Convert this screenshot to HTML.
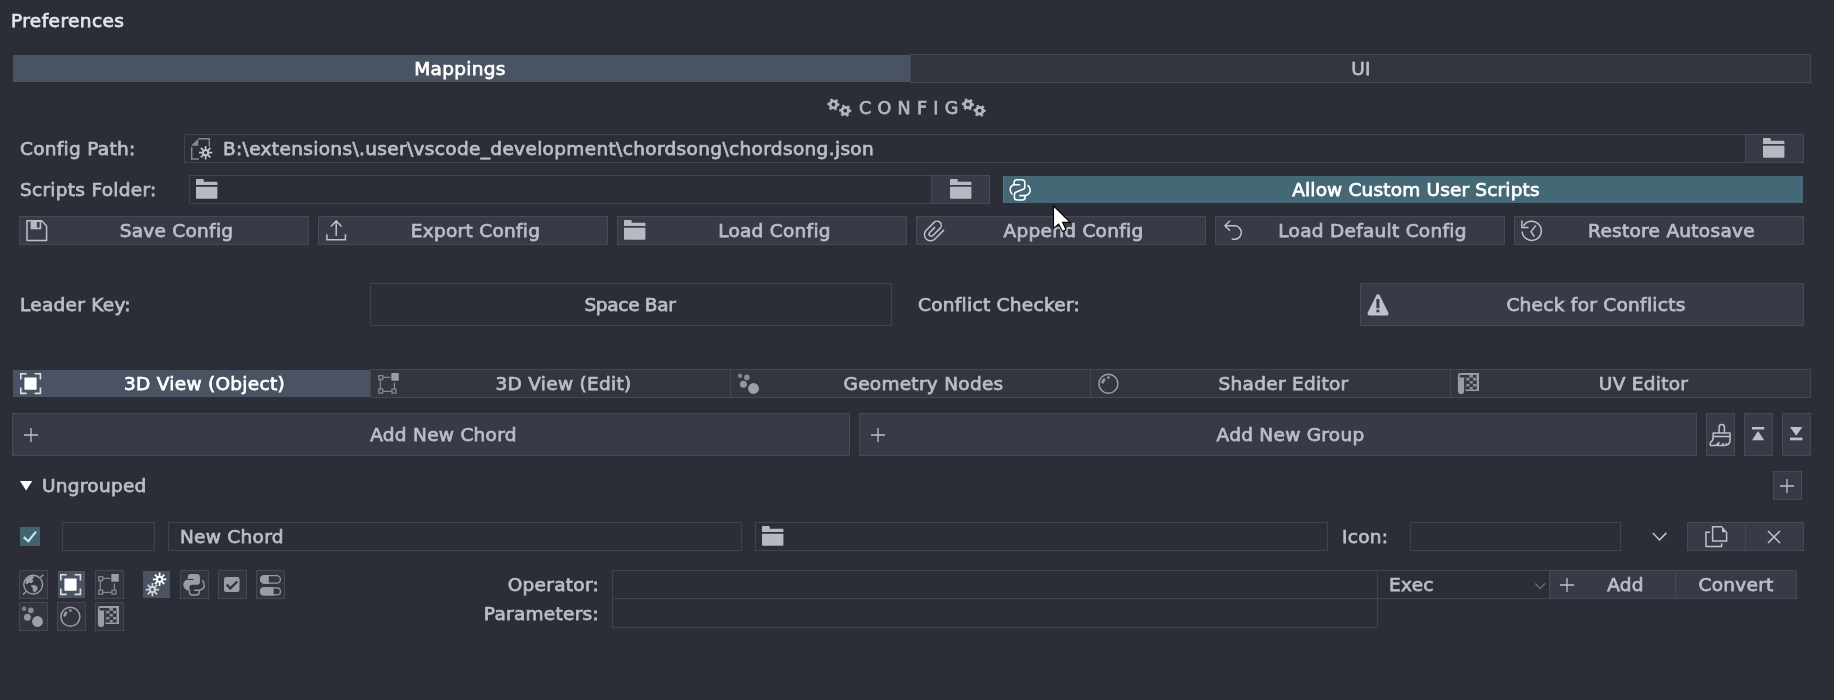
<!DOCTYPE html>
<html lang="en">
<head>
<meta charset="utf-8">
<title>Preferences</title>
<style>
html,body{margin:0;padding:0;}
body{width:1834px;height:700px;overflow:hidden;background:#2b2d37;position:relative;
 font-family:"DejaVu Sans","Liberation Sans",sans-serif;font-size:18.5px;letter-spacing:0.28px;color:#bbbdc8;}
.a{position:absolute;box-sizing:border-box;white-space:pre;}
.t{position:absolute;white-space:pre;line-height:22px;height:22px;-webkit-text-stroke:0.75px currentColor;will-change:transform;transform:translateY(0.4px);}
.btn{background:#383b47;border:1px solid #464a56;}
.fld{background:#2b2d37;border:1px solid #40434e;}
.tab{background:#33353f;border:1px solid #454853;}
.ib{background:#32343e;border:1px solid #454853;}
.ia{background:#4a5361;}
.act{background:#4a5361;border-color:#4a5361;color:#fff;}
.teal{background:#456876;border-color:#456876;color:#fff;}
.c{text-align:center;}
.r{text-align:right;}
svg{position:absolute;overflow:visible;}
</style>
</head>
<body>
<!-- title -->
<div class="t" style="left:11.4px;top:10px;color:#e4e5e9;letter-spacing:0.42px;">Preferences</div>

<!-- top tabs -->
<div class="a tab act" style="left:13px;top:55px;width:897px;height:27px;"></div>
<div class="a tab" style="left:910px;top:54px;width:901px;height:29px;"></div>
<div class="t c" style="left:11px;top:58px;width:898px;color:#fff;">Mappings</div>
<div class="t c" style="left:911px;top:58px;width:900px;">UI</div>

<!-- config header -->
<div class="t" style="left:858.5px;top:96.6px;font-size:17.5px;letter-spacing:6.3px;color:#b4b6bf;">CONFIG</div>

<!-- config path row -->
<div class="t" style="left:20px;top:138px;">Config Path:</div>
<div class="a fld" style="left:184px;top:134px;width:1562px;height:29px;"></div>
<div class="a btn" style="left:1745px;top:134px;width:59px;height:29px;"></div>
<div class="t" style="left:223px;top:138px;letter-spacing:0.34px;">B:\extensions\.user\vscode_development\chordsong\chordsong.json</div>

<!-- scripts folder row -->
<div class="t" style="left:20px;top:179px;">Scripts Folder:</div>
<div class="a fld" style="left:189px;top:175px;width:743px;height:29px;"></div>
<div class="a btn" style="left:931px;top:175px;width:59px;height:29px;"></div>
<div class="a teal" style="left:1003px;top:176px;width:800px;height:27px;border:0;border-left:1px solid #5b7582"></div>
<div class="t c" style="left:1028px;top:179px;width:776px;color:#fff;letter-spacing:0.17px;">Allow Custom User Scripts</div>

<!-- config buttons -->
<div class="a btn" style="left:19px;top:216px;width:290px;height:29px;"></div>
<div class="a btn" style="left:318px;top:216px;width:290px;height:29px;"></div>
<div class="a btn" style="left:617px;top:216px;width:290px;height:29px;"></div>
<div class="a btn" style="left:916px;top:216px;width:290px;height:29px;"></div>
<div class="a btn" style="left:1215px;top:216px;width:290px;height:29px;"></div>
<div class="a btn" style="left:1514px;top:216px;width:290px;height:29px;"></div>
<div class="t c" style="left:44px;top:220px;width:265px;">Save Config</div>
<div class="t c" style="left:343px;top:220px;width:265px;">Export Config</div>
<div class="t c" style="left:642px;top:220px;width:265px;">Load Config</div>
<div class="t c" style="left:941px;top:220px;width:265px;">Append Config</div>
<div class="t c" style="left:1240px;top:220px;width:265px;">Load Default Config</div>
<div class="t c" style="left:1539px;top:220px;width:265px;">Restore Autosave</div>

<!-- leader key row -->
<div class="t" style="left:20px;top:294px;">Leader Key:</div>
<div class="a fld" style="left:370px;top:283px;width:522px;height:43px;"></div>
<div class="t c" style="left:370px;top:294px;width:520px;letter-spacing:-0.3px;">Space Bar</div>
<div class="t" style="left:918px;top:294px;">Conflict Checker:</div>
<div class="a btn" style="left:1360px;top:283px;width:444px;height:43px;"></div>
<div class="t c" style="left:1388px;top:294px;width:416px;">Check for Conflicts</div>

<!-- editor tabs -->
<div class="a tab act" style="left:13px;top:370px;width:357px;height:27px;"></div>
<div class="a tab" style="left:370px;top:369px;width:361px;height:29px;"></div>
<div class="a tab" style="left:730px;top:369px;width:361px;height:29px;"></div>
<div class="a tab" style="left:1090px;top:369px;width:361px;height:29px;"></div>
<div class="a tab" style="left:1450px;top:369px;width:361px;height:29px;"></div>
<div class="t c" style="left:38px;top:373px;width:333px;color:#fff;">3D View (Object)</div>
<div class="t c" style="left:396px;top:373px;width:335px;">3D View (Edit)</div>
<div class="t c" style="left:756px;top:373px;width:335px;">Geometry Nodes</div>
<div class="t c" style="left:1116px;top:373px;width:335px;">Shader Editor</div>
<div class="t c" style="left:1476px;top:373px;width:335px;">UV Editor</div>

<!-- add buttons -->
<div class="a btn" style="left:12px;top:413px;width:838px;height:43px;"></div>
<div class="t c" style="left:37px;top:424px;width:813px;">Add New Chord</div>
<div class="a btn" style="left:859px;top:413px;width:838px;height:43px;"></div>
<div class="t c" style="left:884px;top:424px;width:813px;">Add New Group</div>
<div class="a btn" style="left:1706px;top:413px;width:29px;height:43px;"></div>
<div class="a btn" style="left:1744px;top:413px;width:29px;height:43px;"></div>
<div class="a btn" style="left:1782px;top:413px;width:29px;height:43px;"></div>

<!-- group header -->
<div class="t" style="left:42px;top:475px;">Ungrouped</div>
<div class="a btn" style="left:1773px;top:471px;width:29px;height:29px;"></div>

<!-- chord row -->
<div class="a" style="left:19.5px;top:526.5px;width:20px;height:19.5px;background:#45636f;"></div>
<div class="a fld" style="left:62px;top:522px;width:93px;height:29px;"></div>
<div class="a fld" style="left:168px;top:522px;width:574px;height:29px;"></div>
<div class="t" style="left:180px;top:526px;">New Chord</div>
<div class="a fld" style="left:755px;top:522px;width:573px;height:29px;"></div>
<div class="t" style="left:1342px;top:526px;">Icon:</div>
<div class="a fld" style="left:1410px;top:522px;width:211px;height:29px;"></div>
<div class="a btn" style="left:1687px;top:522px;width:59px;height:29px;"></div>
<div class="a btn" style="left:1745px;top:522px;width:59px;height:29px;"></div>

<!-- icon buttons -->
<div class="a ib" style="left:19px;top:570px;width:29px;height:29px;"></div>
<div class="a ia" style="left:58px;top:571px;width:27px;height:27px;"></div>
<div class="a ib" style="left:95px;top:570px;width:29px;height:29px;"></div>
<div class="a ia" style="left:143px;top:571px;width:27px;height:27px;"></div>
<div class="a ib" style="left:180px;top:570px;width:29px;height:29px;"></div>
<div class="a ib" style="left:218px;top:570px;width:29px;height:29px;"></div>
<div class="a ib" style="left:256px;top:570px;width:29px;height:29px;"></div>
<div class="a ib" style="left:19px;top:602px;width:29px;height:29px;"></div>
<div class="a ib" style="left:57px;top:602px;width:29px;height:29px;"></div>
<div class="a ib" style="left:95px;top:602px;width:29px;height:29px;"></div>

<!-- operator rows -->
<div class="t r" style="left:400px;top:574px;width:199px;">Operator:</div>
<div class="t r" style="left:400px;top:603px;width:199px;">Parameters:</div>
<div class="a fld" style="left:612px;top:570px;width:766px;height:29px;"></div>
<div class="a fld" style="left:612px;top:598px;width:766px;height:30px;"></div>
<div class="a fld" style="left:1377px;top:570px;width:173px;height:29px;"></div>
<div class="t" style="left:1389px;top:574px;">Exec</div>
<div class="a btn" style="left:1549px;top:570px;width:127px;height:29px;"></div>
<div class="a btn" style="left:1675px;top:570px;width:122px;height:29px;"></div>
<div class="t c" style="left:1575px;top:574px;width:101px;">Add</div>
<div class="t c" style="left:1675px;top:574px;width:122px;">Convert</div>

<!--ICONS-->
<svg width="0" height="0" style="left:0;top:0">
<defs>
<path id="folder" d="M0.8,0 H6.9 Q7.7,0 7.7,0.8 V2.8 H20.6 Q21.4,2.8 21.4,3.6 V5.9 H0 V0.8 Q0,0 0.8,0 Z M0,7.8 H21.4 V19 Q21.4,19.8 20.6,19.8 H0.8 Q0,19.8 0,19 Z"/>
<g id="cog">
 <circle r="3.3" fill="none" stroke="currentColor" stroke-width="2.8"/>
 <circle r="5.1" fill="none" stroke="currentColor" stroke-width="2" stroke-dasharray="2.4 2.94" transform="rotate(-12)"/>
</g>
<g id="sun">
 <path d="M0,-6.7V6.7M-6.7,0H6.7M-4.74,-4.74L4.74,4.74M-4.74,4.74L4.74,-4.74" stroke="currentColor" stroke-width="1.7" fill="none"/>
 <circle r="3.5" fill="currentColor"/>
</g>
<path id="plus" d="M-7,0H7M0,-7V7" stroke="currentColor" stroke-width="1.3" fill="none"/>
<g id="objicon">
 <path d="M0.8,6.6V0.8H6.6M14.6,0.8H20.4V6.6M20.4,14.6V20.4H14.6M6.6,20.4H0.8V14.6" fill="none" stroke-width="1.6"/>
 <rect x="4.4" y="4.6" width="12.2" height="12.1" rx="0.6" stroke="none"/>
</g>
<g id="editicon">
 <path d="M1.8,2.6h3.9v3.9h-3.9zM1.8,16.2h3.9v3.9h-3.9zM15,16.2h3.9v3.9h-3.9zM6.4,4.3H13.4M3.3,7.2V15.5M6.4,18.4H14.3M17.4,9.5V15.5" fill="none" stroke-width="1.3"/>
 <rect x="14.3" y="0" width="7.5" height="7.7" rx="0.6" stroke="none"/>
</g>
<g id="geoicon" stroke="none">
 <circle cx="3.1" cy="2.7" r="2.2" opacity="0.72"/>
 <circle cx="9.9" cy="4.4" r="2.8" opacity="0.8"/>
 <circle cx="6.4" cy="11.2" r="3.5" opacity="0.9"/>
 <circle cx="16.5" cy="15.5" r="5.4"/>
</g>
<g id="shadericon">
 <circle cx="11.4" cy="10.7" r="9.5" fill="none" stroke-width="1.5"/>
 <circle cx="11.4" cy="4.6" r="1.3" stroke="none"/>
 <ellipse cx="6.3" cy="8" rx="3" ry="1.5" transform="rotate(-58 6.3 8)" stroke="none"/>
</g>
<g id="uvicon" stroke="none">
 <path d="M0.9,2.4Q0.9,0 3.3,0H22V18H8.5V4.5H7V18.6Q7,21.1 4.5,21.1H3.9Q0.9,21.1 0.9,18.1Z"/>
</g>
</defs>
</svg>

<!-- header cogs -->
<svg style="left:0;top:0;color:#b4b6bf" width="1" height="1">
 <use href="#cog" x="833.4" y="104.5"/><use href="#cog" x="845.2" y="110.7"/>
 <use href="#cog" x="967.9" y="104.4"/><use href="#cog" x="979.6" y="110.7"/>
</svg>

<!-- config path file icon -->
<svg style="left:191px;top:138px" width="24" height="24">
 <path d="M0.7,9.2V21.1H8M7.5,0.8H18.3V8.5" fill="none" stroke="#858894" stroke-width="1.5"/>
 <path d="M0,7.7L7.3,0.4V7.7Z" fill="#858894"/>
 <g transform="translate(14.6,14.7)" style="color:#c3c5cd"><use href="#sun"/><circle r="1.6" fill="#2b2d37"/></g>
</svg>

<!-- folders -->
<svg style="left:196.3px;top:179.2px" width="22" height="20" fill="#b6b8c2"><use href="#folder"/></svg>
<svg style="left:949.6px;top:179.2px" width="22" height="20" fill="#b6b8c2"><use href="#folder"/></svg>
<svg style="left:1763px;top:138.2px" width="22" height="20" fill="#b6b8c2"><use href="#folder"/></svg>
<svg style="left:624.3px;top:220.2px" width="22" height="20" fill="#b6b8c2"><use href="#folder"/></svg>
<svg style="left:762.3px;top:526.2px" width="22" height="20" fill="#b6b8c2"><use href="#folder"/></svg>

<!-- python toggle -->
<svg style="left:1010.3px;top:179px" width="22" height="22" fill="none" stroke="#fff" stroke-width="1.6" stroke-linecap="round" stroke-linejoin="round">
 <path d="M9.5,5.7H4.1V3.7Q4.1,0.8 6.9,0.8H12Q14.8,0.8 14.8,3.7V8Q14.8,10.1 12.3,10.6L7,12.7Q4.4,13.4 4.4,15.6V18.2Q4.4,21 7.3,21H12.4Q15.1,21 15.1,18.2V16.6H9.8"/>
 <path d="M4.1,5.7Q0.2,6.6 0.2,10.8Q0.2,13.4 2,15"/>
 <path d="M18,6.6Q20.2,8.6 20.2,11Q20.2,15.6 15.1,16.6"/>
</svg>

<!-- save -->
<svg style="left:26.3px;top:220.2px" width="22" height="22">
 <path d="M1,0.8H15.7L20.6,5.9V20.5H1Z" fill="none" stroke="#bfc1ca" stroke-width="1.5" stroke-linejoin="round"/>
 <path d="M4.6,0.9H15.3V9.3H4.6Z" fill="#b6b8c2"/>
 <rect x="10.9" y="2" width="2.7" height="5.6" fill="#383b47"/>
</svg>
<!-- export -->
<svg style="left:325.3px;top:220px" width="22" height="22" fill="none" stroke="#bfc1ca" stroke-width="1.5">
 <path d="M11.2,0.7V15.9M6,6.4L11.2,0.9L16.5,6.4M1.9,14.2V19.8H20.4V14.2"/>
</svg>
<!-- paperclip -->
<svg style="left:923.3px;top:220px" width="22" height="22" fill="none" stroke="#bfc1ca" stroke-width="1.5">
 <path transform="translate(10.8,10.86) scale(0.945) translate(-10.3,-10.86)" stroke-width="1.6" d="M21.1,9.8L11.5,19.4A6.5,6.5 0 0 1 2.3,10.2L10.6,1.9A4.45,4.45 0 0 1 16.9,8.2L9.3,15.8A2.3,2.3 0 0 1 6,12.5L11.6,6.9"/>
</svg>
<!-- undo -->
<svg style="left:1222.3px;top:220px" width="22" height="22" fill="none" stroke="#bfc1ca" stroke-width="1.5">
 <path stroke-linejoin="round" d="M8,0.8L2.9,5.75L8,10.8M2.9,5.75H13.1A6.8,6.8 0 0 1 13.1,19.3H9.7"/>
</svg>
<!-- restore -->
<svg style="left:1521.3px;top:220px" width="22" height="22" fill="none" stroke="#bfc1ca" stroke-width="1.5">
 <path d="M0.9,0.6V7.4H7.5M2.39,6A9.6,9.6 0 1 1 1.12,11.47M14.8,5.4L10,11.7L13.4,16.6"/>
</svg>

<!-- warning -->
<svg style="left:1367px;top:294px" width="22" height="22">
 <path d="M11,2.4L19.5,19.6H2.5Z" fill="#bfc1ca" stroke="#bfc1ca" stroke-width="4" stroke-linejoin="round"/>
 <rect x="9.4" y="5" width="3" height="9.2" fill="#383b47"/>
 <rect x="9.4" y="15.7" width="3" height="2.6" fill="#383b47"/>
</svg>

<!-- editor tab icons -->
<svg style="left:19.6px;top:373.3px" width="22" height="22" fill="#fff" stroke="#dcdee4"><use href="#objicon"/></svg>
<svg style="left:376.6px;top:373.3px" width="22" height="22" fill="#9a9da8" stroke="#858894"><use href="#editicon"/></svg>
<svg style="left:736.6px;top:373.3px" width="22" height="22" fill="#9da0ab"><use href="#geoicon"/></svg>
<svg style="left:1096.6px;top:373.3px" width="22" height="22" fill="#9a9da8" stroke="#9a9da8"><use href="#shadericon"/></svg>
<svg style="left:1456.6px;top:373.3px" width="22" height="22" fill="#9a9da8"><use href="#uvicon"/>
 <g fill="#33353f"><path d="M2.2,3.1L3.4,1.9H12.5V4.4H3.4Z"/><rect x="8.5" y="4.4" width="11.2" height="12.1"/></g>
 <g fill="#8d909b"><rect x="12.7" y="1.9" width="3.1" height="2.6"/><rect x="9.4" y="4.9" width="3.1" height="2.6"/><rect x="16" y="4.9" width="3.4" height="2.6"/><rect x="12.7" y="7.9" width="3.1" height="2.6"/><rect x="9.4" y="10.9" width="3.1" height="2.6"/><rect x="16" y="10.9" width="3.4" height="2.6"/><rect x="12.7" y="13.9" width="3.1" height="2.6"/></g>
 <g fill="#33353f"><rect x="16" y="1.9" width="3.4" height="2.6"/></g>
</svg>

<!-- add buttons plus -->
<svg style="left:30.6px;top:434.7px;color:#bfc1ca" width="1" height="1"><use href="#plus"/></svg>
<svg style="left:877.6px;top:434.7px;color:#bfc1ca" width="1" height="1"><use href="#plus"/></svg>
<svg style="left:1787.3px;top:485.6px;color:#bfc1ca" width="1" height="1"><use href="#plus"/></svg>
<svg style="left:1567.3px;top:584.7px;color:#bfc1ca" width="1" height="1"><use href="#plus"/></svg>

<!-- brush -->
<svg style="left:1709px;top:423px" width="24" height="24" fill="none" stroke="#bfc1ca" stroke-width="1.5" stroke-linejoin="round">
 <path d="M10.1,10V4.2A2.65,2.65 0 0 1 15.4,4.2V10"/>
 <path d="M4.2,10H21V17Q21,22.5 15,22.5H8.5L10,19.5L6.5,22.5H1.3V19.7Q4.2,17.5 4.2,13.5Z"/>
 <path d="M4.2,13.5H21M14,22.5V20M17.3,22V20"/>
</svg>
<!-- move top / bottom -->
<svg style="left:1752.4px;top:427.3px" width="13" height="14" fill="#bfc1ca"><rect x="0" y="0" width="12.2" height="2.5"/><path d="M6.1,4.1L12.2,13.3H0Z"/></svg>
<svg style="left:1790.4px;top:427.3px" width="13" height="14" fill="#bfc1ca"><rect x="0" y="10.6" width="12.4" height="2.7"/><path d="M0,0H12.4L6.2,8.8Z"/></svg>

<!-- disclosure triangle -->
<svg style="left:20.4px;top:481.3px" width="13" height="10" fill="#fff"><path d="M0,0H12.2L6.1,9.4Z"/></svg>

<!-- checkbox check -->
<svg style="left:19px;top:526px" width="22" height="22" fill="none" stroke="#b5ecff" stroke-width="2.1"><path d="M4.7,11.1L9.3,15.2L17,5.7"/></svg>

<!-- chevron, copy, x -->
<svg style="left:1652px;top:532px" width="16" height="10" fill="none" stroke="#c3c5cd" stroke-width="1.5"><path d="M0.8,0.9L7.5,7.9L14.4,0.9"/></svg>
<svg style="left:1705px;top:526px" width="24" height="22" fill="none" stroke="#bfc1ca" stroke-width="1.5">
 <path d="M17,0.8H7.6V14.9H21.6V6"/><path d="M17,0.2L22.3,6.2H17Z" fill="#bfc1ca" stroke="none"/>
 <path d="M5,6.2H1V20.6H16.6V17.3"/>
</svg>
<svg style="left:1768.4px;top:530.5px" width="13" height="13" fill="none" stroke="#c3c5cd" stroke-width="1.5"><path d="M0,0L12,12M12,0L0,12"/></svg>
<!-- dropdown chevron -->
<svg style="left:1535px;top:582.5px" width="11" height="7" fill="none" stroke="#6d707b" stroke-width="1.3"><path d="M0.3,0.5L5.2,5.6L10.1,0.5"/></svg>

<!-- chord icon buttons -->
<!-- world -->
<svg style="left:23px;top:574px" width="22" height="22" fill="none" stroke="#9a9da8" stroke-width="1.4">
 <circle cx="10.2" cy="10.6" r="9.4"/>
 <path d="M17.2,3.6L20.4,0.7M0,20.5L3.2,17.6"/>
 <path d="M3.2,5.2Q6,2.2 9.5,1.8L11.3,3.3L9,5.3L10.8,7L8.2,9.2L6,8.4L4.2,10.6L2.5,9.3Z" fill="#9a9da8" stroke="none"/>
 <path d="M7.5,11.8L11,10.8L14.3,12.6L14.6,15.5L11.6,18.6L9.6,16.5L9.8,14.3Z" fill="#9a9da8" stroke="none"/>
</svg>
<svg style="left:60px;top:574px" width="22" height="22" fill="#fff" stroke="#dcdee4"><use href="#objicon"/></svg>
<svg style="left:97px;top:574px" width="22" height="22" fill="#9a9da8" stroke="#858894"><use href="#editicon"/></svg>
<!-- gears -->
<svg style="left:0;top:0" width="1" height="1">
 <g transform="translate(152.4,589.6)" style="color:#d2d4da"><use href="#sun"/><circle r="1.6" fill="#4a5361"/></g>
 <g transform="translate(159.6,579.3)" style="color:#fff"><use href="#sun"/><circle r="1.6" fill="#4a5361"/></g>
</svg>
<!-- python filled -->
<svg style="left:183.2px;top:574.3px" width="22" height="22">
 <path d="M4.8,2.9Q4.8,0 7.6,0H14Q16.9,0 16.9,2.9V8.1Q16.9,10.8 14.2,10.8H9.2Q6.5,10.9 6.4,13.6L6.2,16.8Q2.6,16.4 0.9,13.4Q-0.6,9.5 1.6,7.2Q2.8,5.9 4.8,5.6Z" fill="#9a9da8"/>
 <path d="M4.8,5.5H10.8" stroke="#32343e" stroke-width="1" fill="none"/>
 <path d="M6.4,15.5V18Q6.4,21 9.4,21H13.4Q16.2,21 16.2,18.2V16.2H11.3M19.1,6.3Q21.6,8.6 21.3,11.4Q20.9,15.6 16.2,16.2" fill="none" stroke="#9a9da8" stroke-width="1.4"/>
</svg>
<!-- checkbox icon -->
<svg style="left:224.2px;top:577.2px" width="16" height="16">
 <rect x="0" y="0" width="15.5" height="15" rx="2.2" fill="#9a9da8"/>
 <path d="M2.8,7.6L6.3,11.3L13.3,4.5" fill="none" stroke="#32343e" stroke-width="2.4"/>
</svg>
<!-- toggles -->
<svg style="left:259.7px;top:574.7px" width="22" height="22" fill="#9a9da8">
 <rect x="0.6" y="0.6" width="19.8" height="7.6" rx="3.8" fill="none" stroke="#9a9da8" stroke-width="1.2"/>
 <path d="M4.4,0H8.8V8.8H4.4A4.4,4.4 0 0 1 4.4,0Z"/>
 <rect x="0.6" y="12.9" width="19.8" height="7" rx="3.5" fill="none" stroke="#9a9da8" stroke-width="1.2"/>
 <path d="M4.1,12.3H13.6V20.5H4.1A4.1,4.1 0 0 1 4.1,12.3Z"/>
</svg>
<svg style="left:21.2px;top:605.8px" width="22" height="22" fill="#9da0ab"><use href="#geoicon"/></svg>
<svg style="left:59.2px;top:605.5px" width="22" height="22" fill="#9a9da8" stroke="#9a9da8"><use href="#shadericon"/></svg>
<svg style="left:97.2px;top:605.6px" width="22" height="22" fill="#9a9da8"><use href="#uvicon"/>
 <g fill="#32343e"><path d="M2.2,3.1L3.4,1.9H12.5V4.4H3.4Z"/><rect x="8.5" y="4.4" width="11.2" height="12.1"/></g>
 <g fill="#8d909b"><rect x="12.7" y="1.9" width="3.1" height="2.6"/><rect x="9.4" y="4.9" width="3.1" height="2.6"/><rect x="16" y="4.9" width="3.4" height="2.6"/><rect x="12.7" y="7.9" width="3.1" height="2.6"/><rect x="9.4" y="10.9" width="3.1" height="2.6"/><rect x="16" y="10.9" width="3.4" height="2.6"/><rect x="12.7" y="13.9" width="3.1" height="2.6"/></g>
 <g fill="#32343e"><rect x="16" y="1.9" width="3.4" height="2.6"/></g>
</svg>

<!-- mouse cursor -->
<svg style="left:1053.2px;top:205.2px" width="20" height="28">
 <path d="M0.5,0.8V23.4L5.6,19L9.6,26.4L13,24.7L9.6,17.4H17.2Z" fill="#fff" stroke="#000" stroke-width="1.1" stroke-linejoin="miter"/>
</svg>

<!--/ICONS-->
</body>
</html>
